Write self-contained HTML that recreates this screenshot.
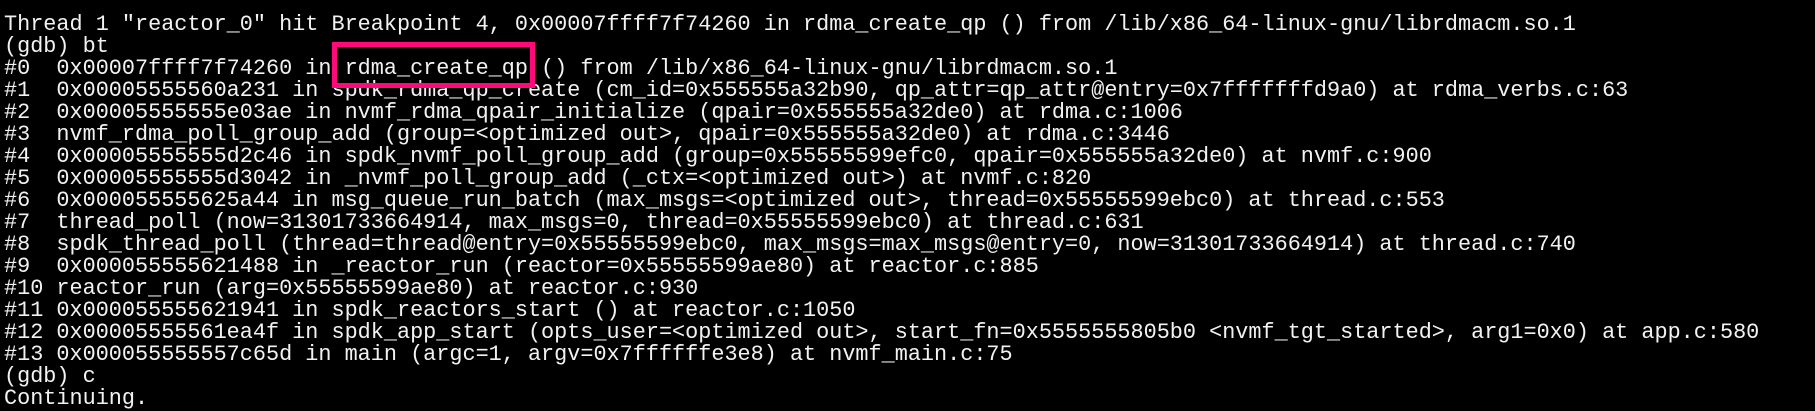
<!DOCTYPE html>
<html><head><meta charset="utf-8"><style>
html,body{margin:0;padding:0;background:#000;width:1815px;height:407px;overflow:hidden}
pre{margin:0;position:absolute;left:4px;top:14px;font-family:"Liberation Mono",monospace;font-size:21.83px;line-height:22px;color:#f2f2f2;white-space:pre}
.box{position:absolute;left:332px;top:42px;width:193px;height:36px;border:5px solid #ff0a7a}
</style></head><body>
<pre>Thread 1 "reactor_0" hit Breakpoint 4, 0x00007ffff7f74260 in rdma_create_qp () from /lib/x86_64-linux-gnu/librdmacm.so.1
(gdb) bt
#0  0x00007ffff7f74260 in rdma_create_qp () from /lib/x86_64-linux-gnu/librdmacm.so.1
#1  0x00005555560a231 in spdk_rdma_qp_create (cm_id=0x555555a32b90, qp_attr=qp_attr@entry=0x7fffffffd9a0) at rdma_verbs.c:63
#2  0x00005555555e03ae in nvmf_rdma_qpair_initialize (qpair=0x555555a32de0) at rdma.c:1006
#3  nvmf_rdma_poll_group_add (group=&lt;optimized out&gt;, qpair=0x555555a32de0) at rdma.c:3446
#4  0x00005555555d2c46 in spdk_nvmf_poll_group_add (group=0x55555599efc0, qpair=0x555555a32de0) at nvmf.c:900
#5  0x00005555555d3042 in _nvmf_poll_group_add (_ctx=&lt;optimized out&gt;) at nvmf.c:820
#6  0x000055555625a44 in msg_queue_run_batch (max_msgs=&lt;optimized out&gt;, thread=0x55555599ebc0) at thread.c:553
#7  thread_poll (now=31301733664914, max_msgs=0, thread=0x55555599ebc0) at thread.c:631
#8  spdk_thread_poll (thread=thread@entry=0x55555599ebc0, max_msgs=max_msgs@entry=0, now=31301733664914) at thread.c:740
#9  0x000055555621488 in _reactor_run (reactor=0x55555599ae80) at reactor.c:885
#10 reactor_run (arg=0x55555599ae80) at reactor.c:930
#11 0x000055555621941 in spdk_reactors_start () at reactor.c:1050
#12 0x00005555561ea4f in spdk_app_start (opts_user=&lt;optimized out&gt;, start_fn=0x5555555805b0 &lt;nvmf_tgt_started&gt;, arg1=0x0) at app.c:580
#13 0x000055555557c65d in main (argc=1, argv=0x7ffffffe3e8) at nvmf_main.c:75
(gdb) c
Continuing.</pre>
<div class="box"></div>
</body></html>
